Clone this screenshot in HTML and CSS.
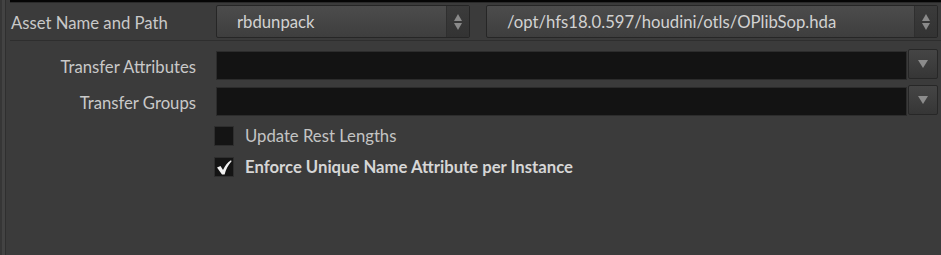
FILE: index.html
```html
<!DOCTYPE html>
<html>
<head>
<meta charset="utf-8">
<link rel="stylesheet" href="styles.css">
</head>
<body>
<div class="frame">
  <div class="edge"></div>
  <div class="main">
    <div class="topbar"></div>
    <div class="row-asset">
      <div class="asset-label">Asset Name and Path</div>
      <div class="menu menu-name">
        <span class="menu-text">rbdunpack</span>
        <span class="spin"><svg width="10" height="18" viewBox="0 0 10 18"><path d="M5 1 L9 8 L1 8 Z" fill="#8a8a8a"/><path d="M1 10 L9 10 L5 17 Z" fill="#8a8a8a"/></svg></span>
      </div>
      <div class="menu menu-path">
        <span class="menu-text">/opt/hfs18.0.597/houdini/otls/OPlibSop.hda</span>
        <span class="spin"><svg width="10" height="18" viewBox="0 0 10 18"><path d="M5 1 L9 8 L1 8 Z" fill="#8a8a8a"/><path d="M1 10 L9 10 L5 17 Z" fill="#8a8a8a"/></svg></span>
      </div>
    </div>
    <div class="sep"></div>
    <div class="parm">
      <div class="label">Transfer Attributes</div>
      <div class="field"></div>
      <div class="drop"><svg width="10" height="8" viewBox="0 0 10 8"><path d="M0 0 L10 0 L5 8 Z" fill="#8c8c8c"/></svg></div>
    </div>
    <div class="parm">
      <div class="label">Transfer Groups</div>
      <div class="field"></div>
      <div class="drop"><svg width="10" height="8" viewBox="0 0 10 8"><path d="M0 0 L10 0 L5 8 Z" fill="#8c8c8c"/></svg></div>
    </div>
    <div class="toggle toggle-first">
      <div class="box"></div>
      <div class="toggle-text">Update Rest Lengths</div>
    </div>
    <div class="toggle">
      <div class="box"><svg width="16" height="16" viewBox="0 0 16 16"><path d="M1 8.5 L4.5 7 L7 11 C9 6.5 11.5 3.5 15 1.2 L15.6 2.3 C12.5 5.5 10 10 8.6 15.5 L6 15.5 Z" fill="#f2f2f2"/></svg></div>
      <div class="toggle-text bold">Enforce Unique Name Attribute per Instance</div>
    </div>
  </div>
</div>
</body>
</html>
```

FILE: styles.css
```css
html, body {
  margin: 0;
  padding: 0;
  background: #3b3b3b;
  height: 100%;
}
body {
  font-family: "Lato", "Open Sans", sans-serif;
  font-size: 16.7px;
  color: #c9c9c9;
}
.frame {
  display: flex;
  height: 255px;
  overflow: hidden;
}
.edge {
  width: 6px;
  flex: none;
  background: linear-gradient(to right, #363636 0 2px, #434343 2px 5px, #2f2f2f 5px 6px);
}
.main {
  flex: 1;
  display: flex;
  flex-direction: column;
}
.topbar {
  height: 2px;
  margin-left: 4px;
  background: #050505;
  border-bottom: 1px solid #2a2a2a;
}
.row-asset {
  display: flex;
  align-items: center;
  margin-top: 2px;
  height: 33px;
}
.asset-label {
  width: 205px;
  padding-left: 5px;
  padding-top: 2px;
  flex: none;
}
.menu {
  height: 31px;
  display: flex;
  align-items: stretch;
  border: 1px solid #262626;
  border-radius: 2px;
  background: linear-gradient(#4c4c4c, #3e3e3e);
  box-sizing: content-box;
}
.menu-name { width: 252px; }
.menu-path { width: 450px; margin-left: 16px; }
.menu-text {
  flex: 1;
  padding-left: 20px;
  padding-top: 1px;
  display: flex;
  align-items: center;
  color: #d2d2d2;
  white-space: nowrap;
  overflow: hidden;
}
.spin {
  width: 22px;
  flex: none;
  display: flex;
  align-items: center;
  justify-content: center;
  background: linear-gradient(#3b3b3b, #333333);
  border-left: 1px solid #2f2f2f;
}
.sep {
  height: 1px;
  background: #2e2e2e;
  margin: 2px 0 0 4px;
}
.parm {
  display: flex;
  align-items: flex-start;
  height: 36px;
}
.label {
  width: 190px;
  flex: none;
  text-align: right;
  height: 29px;
  line-height: 29px;
  margin-top: 12px;
  margin-right: 20px;
  white-space: nowrap;
}
.field {
  width: 689px;
  height: 27px;
  margin-top: 10px;
  margin-left: 0;
  background: #131313;
  border: 1px solid #2c2c2c;
}
.label + .field { margin-top: 10px; }
.drop {
  width: 28px;
  height: 28px;
  margin-top: 8px;
  margin-left: 1px;
  border: 1px solid #272727;
  border-radius: 2px;
  background: linear-gradient(#454545, #363636);
  display: flex;
  align-items: center;
  justify-content: center;
}
.toggle {
  display: flex;
  align-items: center;
  height: 31px;
  padding-left: 208px;
}
.toggle-first { margin-top: 7px; }
.box {
  width: 18px;
  height: 18px;
  border: 1px solid #2e2e2e;
  background: #141414;
  display: flex;
  align-items: center;
  justify-content: center;
  flex: none;
}
.toggle-text {
  margin-left: 11px;
  padding-top: 1px;
  color: #c4c4c4;
  white-space: nowrap;
}
.bold {
  font-weight: 700;
  color: #d6d6d6;
}
```
